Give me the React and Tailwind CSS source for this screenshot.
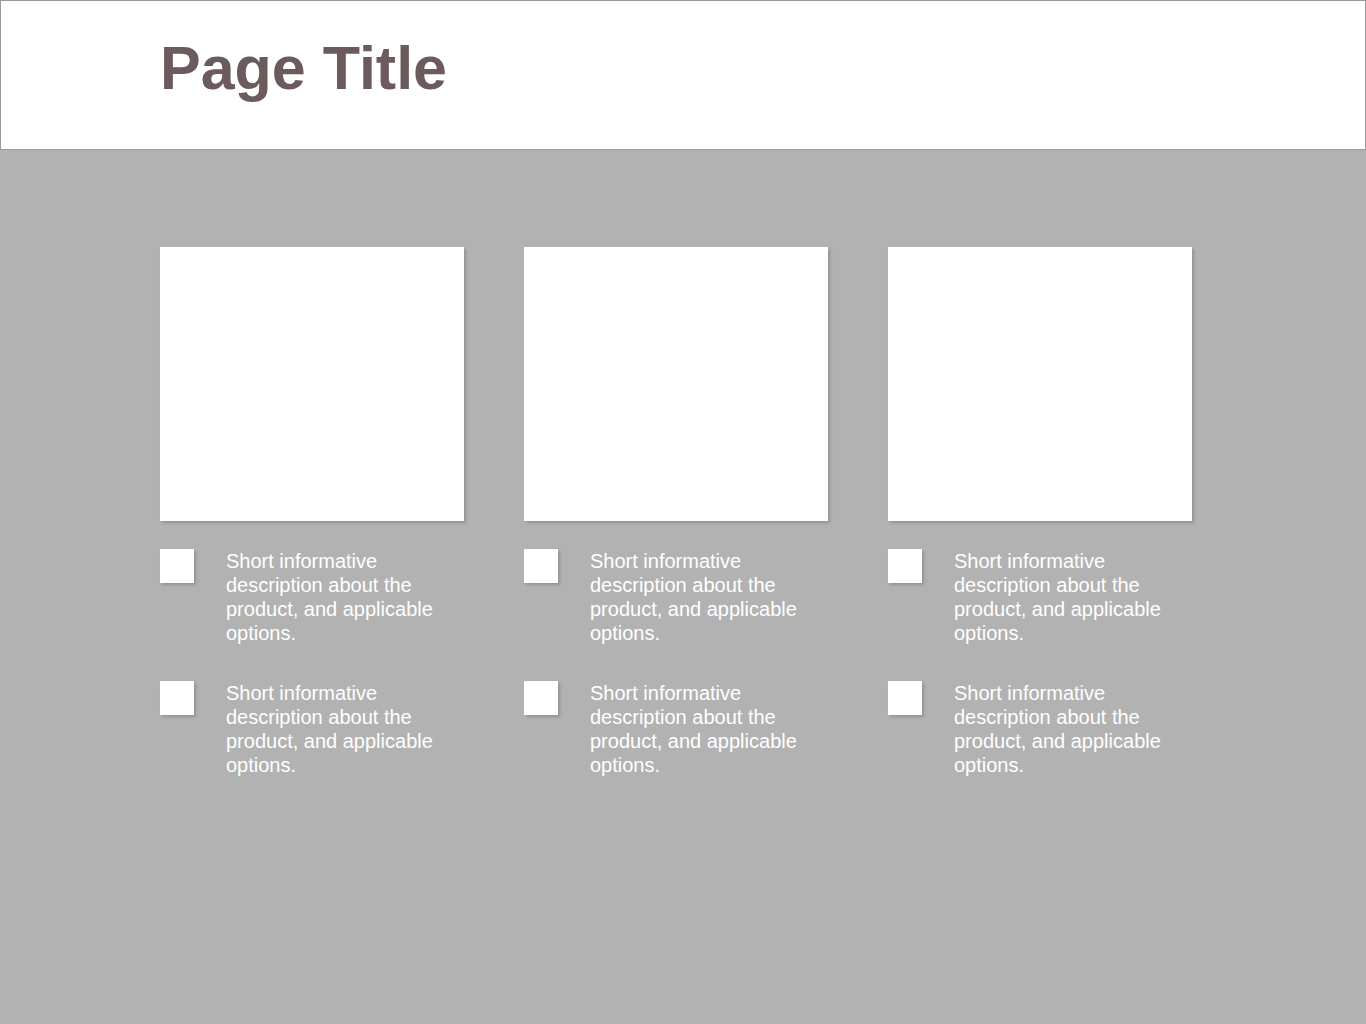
import React from "react";

const columns = [0, 1, 2];
const options = [0, 1];

function Option() {
  return (
    <div className="flex items-start gap-8">
      <div className="w-[34px] h-[34px] shrink-0 bg-white shadow-[2px_2px_3px_rgba(0,0,0,0.18)]" />
      <p className="text-[20px] leading-6 text-white w-[238px]">
        Short informative description about the product, and applicable options.
      </p>
    </div>
  );
}

function ProductColumn() {
  return (
    <div className="flex flex-col">
      <div className="w-[304px] h-[274px] bg-white shadow-[2px_2px_3px_rgba(0,0,0,0.18)]" />
      <div className="mt-[28px] flex flex-col gap-9">
        {options.map((o) => (
          <Option key={o} />
        ))}
      </div>
    </div>
  );
}

export default function App() {
  return (
    <div className="min-h-[1024px] bg-[#b2b2b2] font-['Liberation_Sans',Arial,sans-serif]">
      <header className="h-[150px] bg-white border border-[#9a9a9a] pl-[159px] pt-[37px]">
        <h1 className="text-[61px] leading-[60px] font-bold text-[#6b5b5c]">Page Title</h1>
      </header>
      <main className="pl-[160px] pt-[97px] flex gap-[60px]">
        {columns.map((c) => (
          <ProductColumn key={c} />
        ))}
      </main>
    </div>
  );
}
